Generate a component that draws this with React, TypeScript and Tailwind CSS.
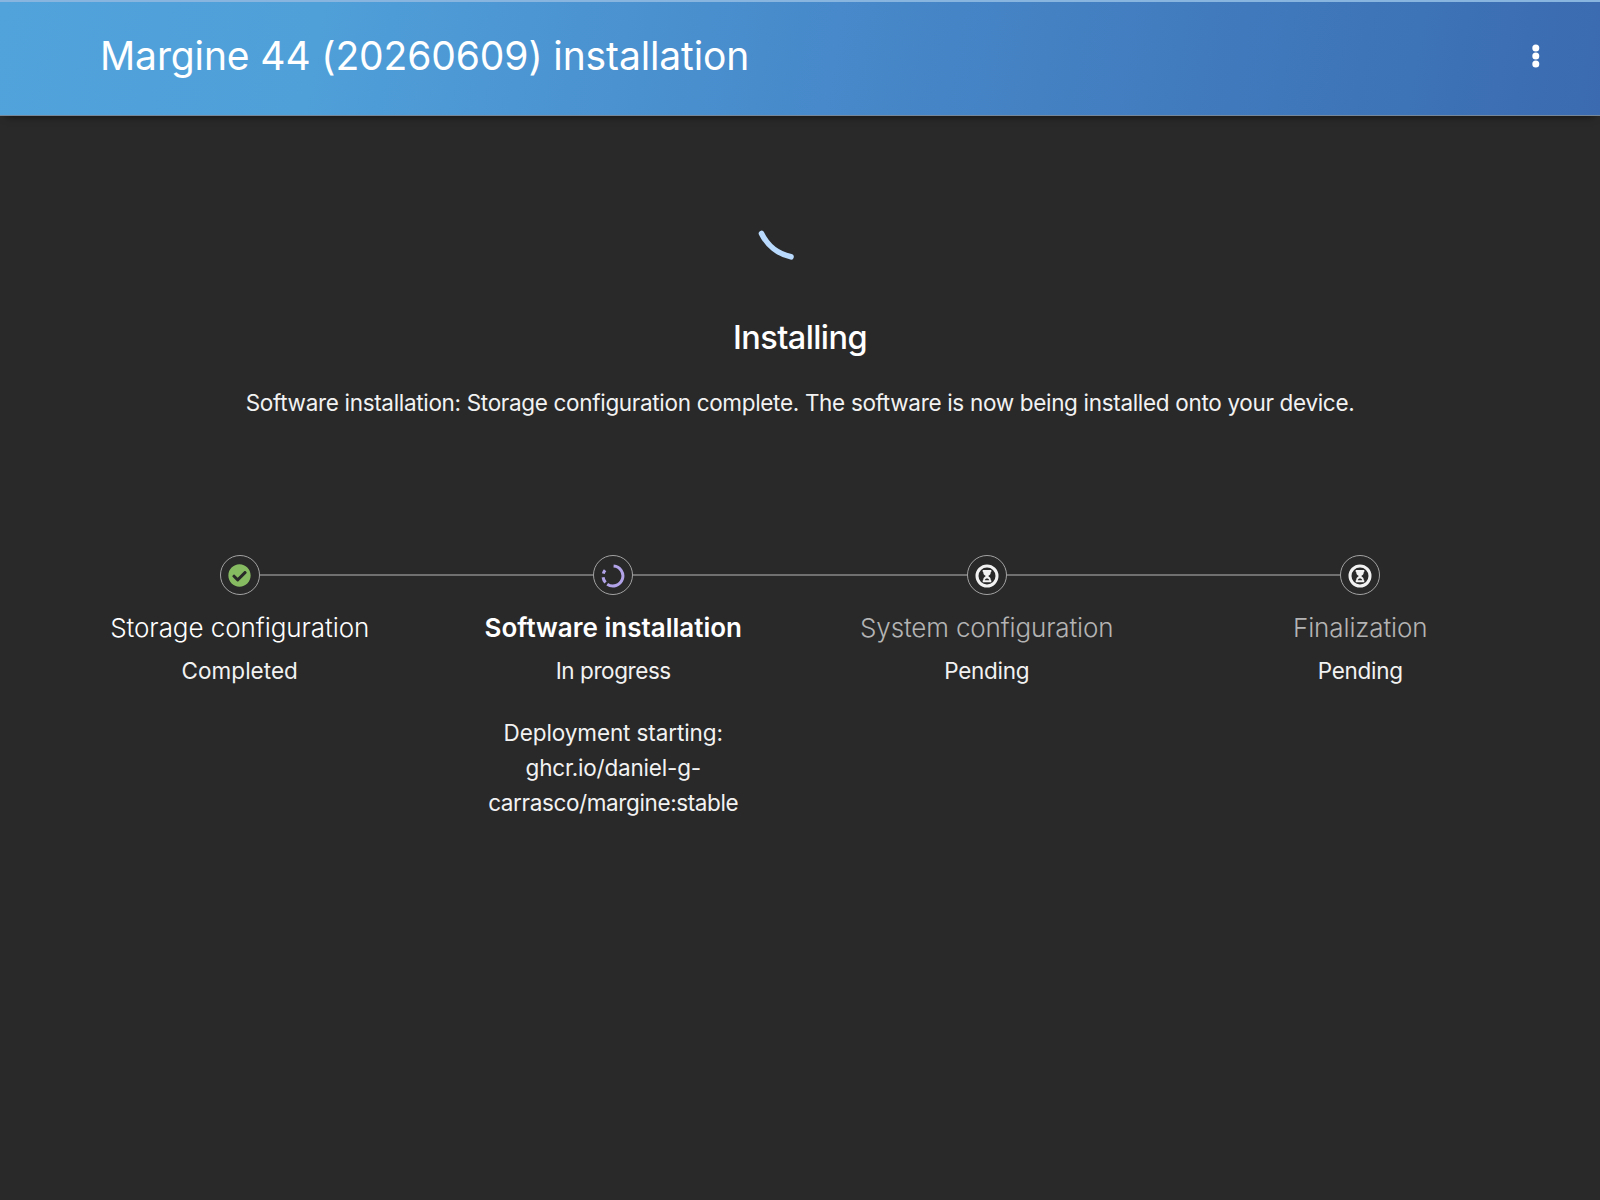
import { FaCheckCircle } from "react-icons/fa";

interface Step {
    title: string
    status: string
    state: "done" | "active" | "pending"
    titleClass: string
    statusClass: string
}

const steps: Step[] = [
    { title: "Storage configuration", status: "Completed", state: "done", titleClass: "tracking-[-0.06px] font-light text-white", statusClass: "tracking-[0.03px]" },
    { title: "Software installation", status: "In progress", state: "active", titleClass: "font-semibold text-white", statusClass: "tracking-[-0.42px]" },
    { title: "System configuration", status: "Pending", state: "pending", titleClass: "tracking-[-0.15px] font-light text-[#b4b4b4]", statusClass: "tracking-[-0.3px]" },
    { title: "Finalization", status: "Pending", state: "pending", titleClass: "tracking-[-0.13px] font-light text-[#b4b4b4]", statusClass: "tracking-[-0.3px]" }
]

const log = [
    { text: "Deployment starting:", className: "tracking-[-0.1px]" },
    { text: "ghcr.io/daniel-g-", className: "tracking-[-0.2px]" },
    { text: "carrasco/margine:stable", className: "tracking-[-0.38px]" }
]

function StepIcon({ state }: { state: Step["state"] }) {
    if(state === "done"){
        return <FaCheckCircle className="mt-px mr-px size-[23px] text-[#87bb62]" />
    }
    if(state === "active"){
        return (
            <svg viewBox="0 0 24 24" className="mt-px size-6" fill="none" stroke="#b2a3e8" strokeWidth="3">
                <path d="M12.6 2 A10 10 0 1 1 6.2 20.2" />
                <path d="M4.5 18.6 A10 10 0 0 1 2.1 13.2" />
                <path d="M2.3 9.6 A10 10 0 0 1 4.1 6.2" />
            </svg>
        )
    }
    return (
        <svg viewBox="0 0 24 24" className="mt-px size-6">
            <circle cx="12" cy="12" r="10" fill="none" stroke="#f2f2f2" strokeWidth="3" />
            <path d="M7.7 6h8.6v1.9h-.5c0 2-.9 3-2.6 4.2 1.7 1.2 2.6 2.2 2.6 4.2h.5v1.9H7.7v-1.9h.5c0-2 .9-3 2.6-4.2-1.7-1.2-2.6-2.2-2.6-4.2h-.5z" fill="#f2f2f2" />
            <path d="M9.8 16.3c.2-1.3 1.1-1.9 2.2-1.9s2 .6 2.2 1.9z" fill="#292929" />
        </svg>
    )
}

function Header() {
    return (
        <header className="relative flex h-[116px] items-center justify-between border-t-2 border-b border-t-[#87b5df] border-b-[#77879a] bg-linear-[100deg,#51a3dc_0%,#4f9fd9_20%,#4789ca_52%,#3d73b7_88%,#3b6ab0_100%] pr-[60px] pl-[100px] shadow-[0_7px_7px_-6px_rgba(0,0,0,0.5)]">
            <h1 className="mb-[5px] text-[39px] leading-[52px] tracking-[-0.12px] whitespace-nowrap text-white">
                Margine 44 (20260609) installation
            </h1>
            <svg viewBox="0 0 8 24" className="mb-[5px] h-6 w-2" fill="#ffffff">
                <circle cx="3.8" cy="4" r="3.5" />
                <circle cx="3.8" cy="12" r="3.5" />
                <circle cx="3.8" cy="20" r="3.5" />
            </svg>
        </header>
    )
}

export default function App() {
    return (
        <div className="h-[1200px] w-[1600px] overflow-hidden bg-[#292929] font-['Inter',sans-serif] text-[#f2f2f2]">
            <Header />
            <main className="flex flex-col items-center pt-[51px]">
                <svg viewBox="0 0 96 96" className="size-24" fill="none">
                    <path d="M9.5 66.5 A42.7 42.7 0 0 0 39 89.8" stroke="#b9dafc" strokeWidth="5.6" strokeLinecap="round" />
                </svg>
                <h2 className="mt-[53px] text-[32.5px] leading-[44px] font-medium tracking-[-0.6px] text-white">Installing</h2>
                <p className="mt-[25px] text-[22.5px] leading-[35px] tracking-[-0.32px] whitespace-nowrap">
                    Software installation: Storage configuration complete. The software is now being installed onto your device.
                </p>
                <ol className="mt-[135px] grid w-[1494px] grid-cols-4 text-center">
                    {
                        steps.map((step, i) => (
                            <li key={step.title} className="flex flex-col items-center">
                                <div className="flex w-full items-center">
                                    <span className={i === 0 ? "h-0.5 flex-1" : "h-0.5 flex-1 bg-[#707070]"} />
                                    <span className="flex size-10 items-center justify-center rounded-full border border-[#a3a3a3]">
                                        <StepIcon state={step.state} />
                                    </span>
                                    <span className={i === steps.length - 1 ? "h-0.5 flex-1" : "h-0.5 flex-1 bg-[#707070]"} />
                                </div>
                                <div className={"mt-[13px] text-[26px] leading-[40px] whitespace-nowrap " + step.titleClass}>{step.title}</div>
                                <div className={"mt-[5px] text-[22.5px] leading-[35px] " + step.statusClass}>{step.status}</div>
                                {step.state === "active" && (
                                    <div className="mt-[27px] text-[22.5px] leading-[35px] whitespace-nowrap">
                                        {log.map((line) => <p key={line.text} className={line.className}>{line.text}</p>)}
                                    </div>
                                )}
                            </li>
                        ))
                    }
                </ol>
            </main>
        </div>
    )
}
